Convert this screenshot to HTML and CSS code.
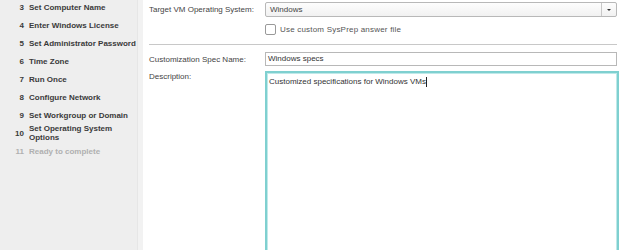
FILE: index.html
```html
<!DOCTYPE html>
<html>
<head>
<meta charset="utf-8">
<link rel="stylesheet" href="styles.css">
</head>
<body>
<div class="page">
  <nav class="sidebar">
    <ol class="steps">
      <li class="step"><span class="num">3</span><span class="txt">Set Computer Name</span></li>
      <li class="step"><span class="num">4</span><span class="txt">Enter Windows License</span></li>
      <li class="step"><span class="num">5</span><span class="txt">Set Administrator Password</span></li>
      <li class="step"><span class="num">6</span><span class="txt">Time Zone</span></li>
      <li class="step"><span class="num">7</span><span class="txt">Run Once</span></li>
      <li class="step"><span class="num">8</span><span class="txt">Configure Network</span></li>
      <li class="step"><span class="num">9</span><span class="txt">Set Workgroup or Domain</span></li>
      <li class="step two"><span class="num">10</span><span class="txt">Set Operating System<br>Options</span></li>
      <li class="step disabled"><span class="num">11</span><span class="txt">Ready to complete</span></li>
    </ol>
  </nav>
  <main class="content">
    <div class="row">
      <label class="lbl">Target VM Operating System:</label>
      <div class="field">
        <div class="select"><span class="sel-text">Windows</span><span class="sel-btn"><span class="caret"></span></span></div>
        <div class="check-row"><span class="checkbox"></span><span class="check-lbl">Use custom SysPrep answer file</span></div>
      </div>
    </div>
    <hr class="sep">
    <div class="row name-row">
      <label class="lbl">Customization Spec Name:</label>
      <div class="field"><div class="input">Windows specs</div></div>
    </div>
    <div class="row desc-row">
      <label class="lbl">Description:</label>
      <div class="field"><div class="textarea">Customized specifications for Windows VMs<span class="cursor"></span></div></div>
    </div>
  </main>
</div>
</body>
</html>
```
FILE: styles.css
```css
* { box-sizing: border-box; }
html, body { margin: 0; padding: 0; background: #fff; }
body { font-family: "Liberation Sans", Arial, sans-serif; font-size: 8px; color: #333; overflow: hidden; }
.page { display: flex; width: 628px; height: 250px; }
.sidebar { width: 143px; flex: none; background: #eeeeee; border-right: 5px solid #f2f2f2; box-shadow: inset -1px 0 0 #e6e6e6; }
.steps { list-style: none; margin: -2px 0 0 0; padding: 0; }
.step { display: flex; align-items: center; height: 18px; font-weight: bold; color: #3a3a3a; }
.step .num { width: 29px; text-align: right; padding-right: 5px; flex: none; }
.step.two { line-height: 9px; }
.step.two .txt { margin-top: -1px; }
.step.disabled { color: #b0b0b0; }
.content { flex: 1; padding: 2px 11px 0 6px; display: flex; flex-direction: column; }
.row { display: flex; }
.lbl { width: 116px; flex: none; color: #444; line-height: 15px; }
.field { flex: 1; }
.select { height: 15px; border: 1px solid #b8b8b8; border-radius: 2px; background: linear-gradient(#fdfdfd, #f1f1f1); display: flex; align-items: center; }
.sel-text { flex: 1; padding-left: 4px; color: #444; }
.sel-btn { width: 15px; height: 100%; border-left: 1px solid #c8c8c8; display: flex; align-items: center; justify-content: center; }
.caret { width: 0; height: 0; border-left: 2px solid transparent; border-right: 2px solid transparent; border-top: 2px solid #333; }
.check-row { display: flex; align-items: center; margin-top: 6px; height: 12px; }
.checkbox { width: 11px; height: 11px; border: 1px solid #999; border-radius: 2px; background: #fff; margin-right: 4px; }
.check-lbl { color: #555; letter-spacing: 0.2px; }
.sep { border: 0; border-top: 1px solid #c8c8c8; margin: 9px 0 7px 0; height: 0; }
.input { height: 14px; border: 1px solid #b8b8b8; padding-left: 2px; line-height: 12px; color: #333; }
.desc-row { margin-top: 4px; flex: 1; }
.desc-row .lbl { line-height: 10px; padding-top: 1px; }
.textarea { height: 190px; border: 2px solid #7fd0d0; box-shadow: inset 0 0 0 1px #bfe9e9; padding: 4px 2px; line-height: 10px; color: #333; margin-right: -2px; }
.cursor { display: inline-block; width: 1px; height: 10px; background: #222; vertical-align: top; }
```
